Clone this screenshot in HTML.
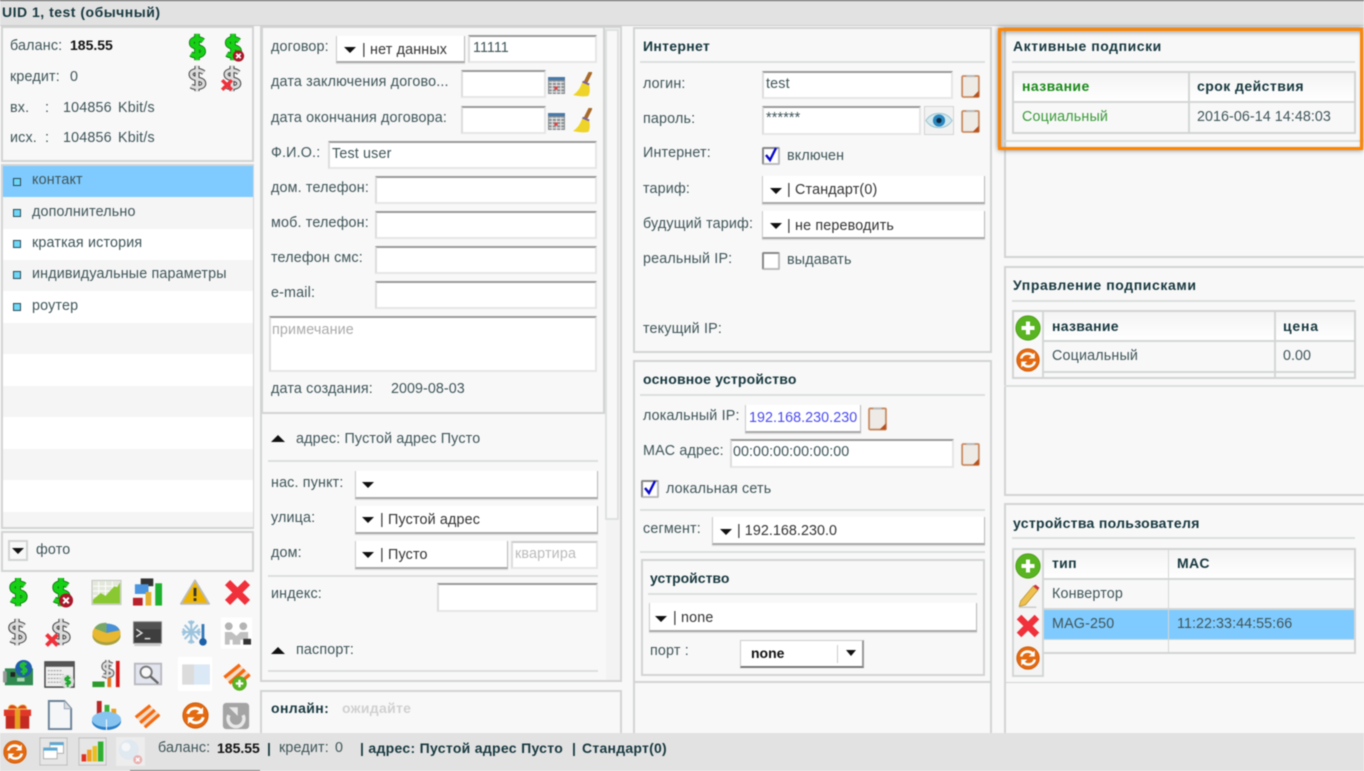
<!DOCTYPE html>
<html lang="ru">
<head>
<meta charset="utf-8">
<title>UID 1, test</title>
<style>
html,body{margin:0;padding:0;width:1364px;height:771px;overflow:hidden;background:#f8f8f8}
#r{position:relative;width:1364px;height:771px;overflow:hidden;background:#f8f8f8;font:14.3px "Liberation Sans","Noto Sans CJK SC",sans-serif;letter-spacing:.17px;color:#3f5559;filter:blur(.4px)}
#r>*{position:absolute;box-sizing:border-box}
.t{white-space:nowrap;line-height:18px;height:16px}
.b{font-weight:700;font-size:14px;line-height:16px;color:#17383f;letter-spacing:.3px}
.k{font-weight:700;font-size:14px;line-height:16px;letter-spacing:0;color:#111}
.n{letter-spacing:.06px}
.p{border:2px solid #d2d4d4;background:#f8f8f8}
.l{height:2px;background:#dcdfdf}
.i{background:#fff;border:2px solid #e6e6e6;border-top:2px solid #9a9a9a;border-left-color:#ddd}
.s{background:#fff;border-right:1px solid #bbb;border-bottom:2px solid #aaa;border-left:1px solid #ccc;box-shadow:0 1px 1px #ddd}
.a{width:0;height:0;border-left:6px solid transparent;border-right:6px solid transparent;border-top:6px solid #111}
.u{width:0;height:0;border-left:7px solid transparent;border-right:7px solid transparent;border-bottom:7px solid #111}
.c{background:#fff;border:2px solid #888;border-right-color:#bbb;border-bottom-color:#bbb;border-radius:2px}
.m{left:3px;width:250px}
.d{width:8px;height:8px;background:#6fd8f8;border:1px solid #2c4a55;left:13px}
.v{background:#d4d6d6}
svg{position:absolute;overflow:visible}
</style>
</head>
<body>
<svg width="0" height="0" style="position:absolute;left:0;top:0">
<defs>
<symbol id="dg" viewBox="0 0 32 32"><path d="M23 9C19 6 10 6 10 11c0 7 13 3 13 10 0 5-9 6-14 3M16 1v30" fill="none" stroke="#0a6a0a" stroke-width="6.500"/><path d="M23 9C19 6 10 6 10 11c0 7 13 3 13 10 0 5-9 6-14 3M16 1v30" fill="none" stroke="#16d016" stroke-width="4.800"/></symbol>
<symbol id="ds" viewBox="0 0 32 32"><path d="M24 9C19 5 9 6 9 11c0 7 15 4 15 11 0 5-10 6-15 3M16 1v30" fill="none" stroke="#444" stroke-width="6"/><path d="M24 9C19 5 9 6 9 11c0 7 15 4 15 11 0 5-10 6-15 3M16 1v30" fill="none" stroke="#dcdcdc" stroke-width="3.600"/></symbol>
<symbol id="rb" viewBox="0 0 32 32"><circle cx="16" cy="16" r="15" fill="#a8182a"/><path d="M10 10l12 12M22 10L10 22" stroke="#fff" stroke-width="4.500"/></symbol>
<symbol id="xx" viewBox="0 0 32 32"><path d="M5 5l22 22M27 5L5 27" stroke="#f0303a" stroke-width="8"/></symbol>
<symbol id="gr" viewBox="0 0 32 32"><rect x="1" y="4" width="30" height="25" fill="#e4e8dc" stroke="#c4c4c4"/><path d="M2 10h28M2 15h28M2 20h28M8 5v23M15 5v23M22 5v23" stroke="#fff"/><path d="M2 28V24l8-7 5 3 9-10 3 1 3-5v22z" fill="#8ac832"/></symbol>
<symbol id="nb" viewBox="0 0 32 32"><rect x="9" y="2" width="13" height="8" fill="#333"/><rect x="3" y="8" width="14" height="10" fill="#4a94e0"/><rect x="1" y="22" width="10" height="8" fill="#b8202a"/><rect x="14" y="16" width="6" height="14" fill="#e4b030"/><rect x="24" y="7" width="7" height="23" fill="#20b030"/></symbol>
<symbol id="wa" viewBox="0 0 32 32"><path d="M16 3L31 28H1z" fill="#eeb400" stroke="#bbb" stroke-width="2" stroke-linejoin="round"/><path d="M16 11v9M16 22v3" stroke="#333" stroke-width="3"/></symbol>
<symbol id="te" viewBox="0 0 32 32"><rect x="1" y="4" width="30" height="23" fill="#3e3e3e" stroke="#999"/><path d="M4 12l6 4-6 4M13 22h6" fill="none" stroke="#ddd" stroke-width="1.600"/><rect x="2" y="4" width="28" height="8" fill="#666" opacity=".5"/><rect x="2" y="27" width="28" height="3" fill="#ccc"/></symbol>
<symbol id="sn" viewBox="0 0 32 32"><path d="M12 3v25M2 15.500h20M5 8l14 15M19 8L5 23M9 4l3 3 3-3M9 27l3-3 3 3M3 12l3 3.500-3 3.500M21 12l-3 3.500 3 3.500" fill="none" stroke="#9cc4de" stroke-width="2.200"/><rect x="23" y="7" width="3" height="17" fill="#3478b8"/><circle cx="24.500" cy="26" r="4" fill="#1c60a8"/></symbol>
<symbol id="hs" viewBox="0 0 32 32"><rect width="32" height="32" fill="#fff"/><circle cx="8" cy="9" r="4" fill="#b4b4b4"/><circle cx="23" cy="9" r="4" fill="#b4b4b4"/><path d="M4 28V15h7l5 4 4-4h8v8H20v5h-8v-5H9v5z" fill="#c0c0c0"/><rect x="23" y="22" width="8" height="6" fill="#333"/></symbol>
<symbol id="ni" viewBox="0 0 32 32"><rect x="2" y="10" width="30" height="18" fill="#2f8a50"/><rect x="0" y="13" width="4" height="12" fill="#999"/><rect x="8" y="14" width="5" height="5" fill="#222"/><rect x="15" y="20" width="8" height="4" fill="#a8d8b0"/><circle cx="22" cy="10" r="9" fill="#1d5fa8"/><path d="M25 6c-3-2-6-1-6 1 0 3 6 2 6 5 0 2-3 3-6 1M22 3v14" fill="none" stroke="#22c030" stroke-width="2.500"/></symbol>
<symbol id="tb" viewBox="0 0 32 32"><rect x="1" y="3" width="30" height="26" fill="#eee" stroke="#444" stroke-width="1.500"/><rect x="1" y="3" width="30" height="5" fill="#555"/><path d="M4 12h14M4 16h16M4 20h13M4 24h14" stroke="#999" stroke-dasharray="2 1"/><circle cx="24" cy="23" r="7" fill="#ddd"/><path d="M27 20c-2-1-5-1-5 1 0 2 5 1 5 3s-3 2-5 1M24.500 17v12" fill="none" stroke="#18a828" stroke-width="2"/></symbol>
<symbol id="sb" viewBox="0 0 32 32"><path d="M22 6c-4-2-9-2-9 2 0 5 9 3 9 7 0 3-6 4-10 2M17 1v20" fill="none" stroke="#666" stroke-width="5"/><path d="M22 6c-4-2-9-2-9 2 0 5 9 3 9 7 0 3-6 4-10 2M17 1v20" fill="none" stroke="#ddd" stroke-width="2.500"/><rect x="1" y="24" width="13" height="6" fill="#2c9a2c"/><rect x="17" y="20" width="4" height="10" fill="#e87820"/><rect x="26" y="2" width="4" height="28" fill="#d81818"/></symbol>
<symbol id="mg" viewBox="0 0 32 32"><rect x="2" y="5" width="28" height="22" fill="#e2e4ee" stroke="#b8b8c0" stroke-width="2"/><circle cx="14" cy="14" r="6" fill="#f8f8f8" stroke="#777" stroke-width="2"/><path d="M18 18l9 8" stroke="#666" stroke-width="2.500"/></symbol>
<symbol id="cd" viewBox="0 0 32 32"><rect x="0" y="0" width="32" height="32" fill="#fff"/><rect x="4" y="7" width="26" height="19" fill="#dbe8f6"/><rect x="4" y="7" width="11" height="19" fill="#dcdcdc"/></symbol>
<symbol id="st" viewBox="0 0 32 32"><path d="M3 18L19 5l11 10-16 14z" fill="#f6dcc8"/><path d="M3 18L19 5M8 24L24 10M13 29L29 15" stroke="#f46a10" stroke-width="3.500"/></symbol>
<symbol id="pl" viewBox="0 0 32 32"><circle cx="16" cy="16" r="15" fill="#58b420" stroke="#4a9a18"/><path d="M16 8v16M8 16h16" stroke="#fff" stroke-width="5"/></symbol>
<symbol id="gi" viewBox="0 0 32 32"><path d="M3 12h26v18H3z" fill="#c42a20"/><path d="M1 9h30v7H1z" fill="#e03828"/><path d="M13 9h6v21h-6z" fill="#e8a020"/><path d="M6 8c0-6 8-5 10 0 2-5 10-6 10 0z" fill="#e04020" stroke="#e8a020"/></symbol>
<symbol id="dc" viewBox="0 0 32 32"><path d="M5 1h16l7 8v21H5z" fill="#f4f6f8" stroke="#6a8298" stroke-width="2"/><path d="M21 1v8h7" fill="#ddd" stroke="#9ab"/></symbol>
<symbol id="pi" viewBox="0 0 32 32"><rect x="6" y="1" width="5" height="15" fill="#b82828"/><rect x="14" y="5" width="5" height="11" fill="#38b038"/><rect x="21" y="9" width="5" height="8" fill="#e8a020"/><ellipse cx="16" cy="22" rx="15" ry="9" fill="#2c80c8"/><ellipse cx="16" cy="20" rx="15" ry="8" fill="#88c4f0"/><path d="M16 20v11" stroke="#fff"/></symbol>
<symbol id="re" viewBox="0 0 32 32"><circle cx="16" cy="16" r="15" fill="#e46a10" stroke="#c85808"/><path d="M7 14c1-7 11-9 16-3M25 18c-1 7-11 9-16 3" fill="none" stroke="#fff" stroke-width="3.500"/><path d="M25 6v8h-8zM7 26v-8h8z" fill="#fff"/></symbol>
<symbol id="rg" viewBox="0 0 32 32"><rect x="1" y="1" width="30" height="30" rx="4" fill="#a4a4a4"/><path d="M8 15a9 9 0 1 0 16 0" fill="none" stroke="#e8e8e8" stroke-width="4"/><path d="M8 6h10v10z" fill="#e8e8e8"/></symbol>
<symbol id="pn" viewBox="0 0 32 32"><path d="M6 23L22 4l6 5-16 19-8 2z" fill="#eec050" stroke="#b89030"/><path d="M22 4l3-2 5 4-2 3z" fill="#d03040"/><path d="M4 31h22" stroke="#ccc" stroke-width="2"/></symbol>
<symbol id="cl" viewBox="0 0 18 22"><rect x="1" y="1" width="16" height="20" rx="1" fill="#eeeae6" stroke="#c88a60" stroke-width="1.700"/><path d="M17 15v6h-6z" fill="#b8501c"/><rect x="5" y="0" width="8" height="2" fill="#bbb"/></symbol>
<symbol id="ey" viewBox="0 0 32 24"><path d="M1 12C8 1 24 1 31 12 24 23 8 23 1 12z" fill="#d4e8ee" stroke="#8fc0cc"/><circle cx="16" cy="12" r="7" fill="#2a88c0"/><circle cx="16" cy="12" r="3" fill="#0c2840"/></symbol>
<symbol id="ca" viewBox="0 0 16 16"><rect width="16" height="16" fill="#8a9094"/><rect width="16" height="3" fill="#4878a8"/><path d="M1 5h14M1 8h14M1 11h14M1 14h14M4 4v12M8 4v12M12 4v12" stroke="#e8e8e8"/><rect x="6" y="9" width="3" height="3" fill="#e04040"/></symbol>
<symbol id="br" viewBox="0 0 22 26"><path d="M19 1l-5 10" stroke="#a86a28" stroke-width="4" stroke-linecap="round"/><path d="M11 10l7 3c1 5 1 9-1 12-5 1-12 0-16-1 5-3 8-8 10-14z" fill="#eed428"/><path d="M11 10l7 3" stroke="#7860b0" stroke-width="2"/></symbol>
<symbol id="wn" viewBox="0 0 32 32"><rect x="1" y="1" width="30" height="30" fill="#e6e6e6" stroke="#bbb"/><rect x="12" y="6" width="15" height="12" fill="#fff" stroke="#aaa"/><rect x="12" y="6" width="15" height="3" fill="#58a8d8"/><rect x="5" y="12" width="15" height="12" fill="#fff" stroke="#aaa"/><rect x="5" y="12" width="15" height="3" fill="#58a8d8"/></symbol>
<symbol id="bc" viewBox="0 0 32 32"><rect x="1" y="1" width="30" height="30" fill="#e6e6e6" stroke="#bbb"/><rect x="4" y="19" width="5" height="8" fill="#e03020"/><rect x="10" y="14" width="5" height="13" fill="#f0a020"/><rect x="16" y="10" width="5" height="17" fill="#e8c020"/><rect x="22" y="5" width="6" height="22" fill="#30b030"/></symbol>
<symbol id="gl" viewBox="0 0 32 32"><rect width="32" height="32" fill="#ededed"/><circle cx="14" cy="14" r="11" fill="#e0e8f0"/><circle cx="11" cy="11" r="5" fill="#f4f6f8"/><circle cx="24" cy="25" r="5" fill="#e8b0b0"/><path d="M22 23l4 4M26 23l-4 4" stroke="#fff" stroke-width="1.500"/></symbol>
<symbol id="pc" viewBox="0 0 32 32"><ellipse cx="16" cy="19" rx="15" ry="10" fill="#a8a040"/><ellipse cx="16" cy="16" rx="15" ry="10" fill="#e8b830"/><path d="M16 16L3 11c3-5 8-6 13-6z" fill="#78a868"/><path d="M16 16V6c6 0 12 2 14 7z" fill="#4890d8"/></symbol>
</defs>
</svg>

<div id="r">
<div style="left:0;top:0;width:1364px;height:26px;background:#e2e2e2;border-top:1px solid #555;border-bottom:1px solid #ccc"></div>
<div class="t b" style="left:2px;top:4px;letter-spacing:.5px">UID 1, test (обычный)</div>

<div class="p" style="left:1px;top:26px;width:253px;height:136px"></div>
<div class="t" style="left:10px;top:37px">баланс:</div><div class="t k" style="left:70px;top:37px">185.55</div>
<div class="t" style="left:10px;top:68px">кредит:</div><div class="t" style="left:70px;top:68px">0</div>
<div class="t" style="left:10px;top:99px">вх.</div><div class="t" style="left:45px;top:99px">:</div><div class="t" style="left:63px;top:99px">104856</div><div class="t" style="left:118px;top:99px">Kbit/s</div>
<div class="t" style="left:10px;top:129px">исх.</div><div class="t" style="left:45px;top:129px">:</div><div class="t" style="left:63px;top:129px">104856</div><div class="t" style="left:118px;top:129px">Kbit/s</div>
<svg style="left:182px;top:33px" width="30" height="28"><use href="#dg"/></svg>
<svg style="left:218px;top:33px" width="30" height="28"><use href="#dg"/></svg>
<svg style="left:232px;top:50px" width="13" height="12"><use href="#rb"/></svg>
<svg style="left:183px;top:65px" width="28" height="27"><use href="#ds"/></svg>
<svg style="left:218px;top:65px" width="28" height="27"><use href="#ds"/></svg>
<svg style="left:220px;top:78px" width="14" height="14"><use href="#xx"/></svg>

<div class="p" style="left:1px;top:164px;width:253px;height:365px"></div>
<div class="m" style="top:166px;height:31px;background:#7fcbff"></div>
<div class="m" style="top:197px;height:32px;background:#f5f5f5"></div>
<div class="m" style="top:229px;height:31px;background:#fff"></div>
<div class="m" style="top:260px;height:31px;background:#f5f5f5"></div>
<div class="m" style="top:291px;height:32px;background:#fff"></div>
<div class="m" style="top:323px;height:31px;background:#f5f5f5"></div>
<div class="m" style="top:354px;height:32px;background:#fff"></div>
<div class="m" style="top:386px;height:31px;background:#f5f5f5"></div>
<div class="m" style="top:417px;height:32px;background:#fff"></div>
<div class="m" style="top:449px;height:31px;background:#f5f5f5"></div>
<div class="m" style="top:480px;height:32px;background:#fff"></div>
<div class="m" style="top:512px;height:15px;background:#f5f5f5"></div>
<div class="d" style="top:178px"></div><div class="t" style="left:32px;top:171px">контакт</div>
<div class="d" style="top:209px"></div><div class="t" style="left:32px;top:203px">дополнительно</div>
<div class="d" style="top:240px"></div><div class="t" style="left:32px;top:234px">краткая история</div>
<div class="d" style="top:271px"></div><div class="t" style="left:32px;top:265px">индивидуальные параметры</div>
<div class="d" style="top:303px"></div><div class="t" style="left:32px;top:297px">роутер</div>

<div class="p" style="left:1px;top:531px;width:253px;height:41px"></div>
<div style="left:8px;top:540px;width:20px;height:21px;background:#f8f8f8;border:2px solid #d2d4d4"></div>
<div class="a" style="left:12px;top:548px"></div>
<div class="t" style="left:36px;top:541px">фото</div>

<svg style="left:3px;top:577px" width="30" height="30"><use href="#dg"/></svg>
<svg style="left:46px;top:577px" width="30" height="30"><use href="#dg"/></svg><svg style="left:58px;top:593px" width="16" height="15"><use href="#rb"/></svg>
<svg style="left:91px;top:576px" width="31" height="32"><use href="#gr"/></svg>
<svg style="left:132px;top:576px" width="31" height="32"><use href="#nb"/></svg>
<svg style="left:180px;top:577px" width="30" height="31"><use href="#wa"/></svg>
<svg style="left:223px;top:578px" width="29" height="29"><use href="#xx"/></svg>
<svg style="left:3px;top:617px" width="28" height="30"><use href="#ds"/></svg>
<svg style="left:47px;top:617px" width="28" height="30"><use href="#ds"/></svg><svg style="left:44px;top:632px" width="16" height="16"><use href="#xx"/></svg>
<svg style="left:91px;top:618px" width="31" height="30"><use href="#pc"/></svg>
<svg style="left:132px;top:618px" width="31" height="30"><use href="#te"/></svg>
<svg style="left:180px;top:617px" width="30" height="31"><use href="#sn"/></svg>
<svg style="left:221px;top:617px" width="31" height="32"><use href="#hs"/></svg>
<svg style="left:2px;top:659px" width="32" height="30"><use href="#ni"/></svg>
<svg style="left:44px;top:659px" width="31" height="31"><use href="#tb"/></svg>
<svg style="left:91px;top:659px" width="31" height="30"><use href="#sb"/></svg>
<svg style="left:133px;top:659px" width="30" height="30"><use href="#mg"/></svg>
<svg style="left:178px;top:657px" width="34" height="34"><use href="#cd"/></svg>
<svg style="left:221px;top:660px" width="32" height="31"><use href="#st"/></svg>
<svg style="left:232px;top:676px" width="15" height="15"><use href="#pl"/></svg>
<svg style="left:3px;top:701px" width="29" height="30"><use href="#gi"/></svg>
<svg style="left:44px;top:700px" width="31" height="31"><use href="#dc"/></svg>
<svg style="left:91px;top:700px" width="31" height="31"><use href="#pi"/></svg>
<svg style="left:132px;top:701px" width="31" height="29"><use href="#st"/></svg>
<svg style="left:182px;top:702px" width="27" height="27"><use href="#re"/></svg>
<svg style="left:222px;top:702px" width="28" height="28"><use href="#rg"/></svg>

<div class="p" style="left:260px;top:26px;width:362px;height:656px"></div>
<div class="p" style="left:261px;top:26px;width:344px;height:388px"></div>
<div style="left:606px;top:28px;width:14px;height:652px;background:#f3f3f3"></div>
<div style="left:605px;top:29px;width:14px;height:491px;background:#f8f8f8;border:2px solid #dfe1e1"></div>
<div class="t" style="left:271px;top:38px">договор:</div>
<div class="s" style="left:336px;top:36px;width:129px;height:27px"></div><div class="a" style="left:344px;top:47px"></div><div class="t" style="left:362px;top:41px;color:#333">| нет данных</div>
<div class="i" style="left:468px;top:35px;width:129px;height:28px"></div><div class="t n" style="left:473px;top:39px">11111</div>
<div class="t" style="left:271px;top:73px">дата заключения догово...</div>
<div class="i" style="left:461px;top:70px;width:85px;height:28px"></div>
<svg style="left:548px;top:77px" width="17" height="17"><use href="#ca"/></svg><svg style="left:572px;top:72px" width="21" height="25"><use href="#br"/></svg>
<div class="t" style="left:271px;top:109px">дата окончания договора:</div>
<div class="i" style="left:461px;top:106px;width:85px;height:28px"></div>
<svg style="left:548px;top:113px" width="17" height="17"><use href="#ca"/></svg><svg style="left:572px;top:108px" width="21" height="25"><use href="#br"/></svg>
<div class="t" style="left:271px;top:144px">Ф.И.О.:</div>
<div class="i" style="left:328px;top:141px;width:269px;height:28px"></div><div class="t" style="left:332px;top:145px">Test user</div>
<div class="t" style="left:271px;top:179px">дом. телефон:</div><div class="i" style="left:375px;top:176px;width:222px;height:28px"></div>
<div class="t" style="left:271px;top:214px">моб. телефон:</div><div class="i" style="left:375px;top:211px;width:222px;height:28px"></div>
<div class="t" style="left:271px;top:249px">телефон смс:</div><div class="i" style="left:375px;top:246px;width:222px;height:28px"></div>
<div class="t" style="left:271px;top:284px">e-mail:</div><div class="i" style="left:375px;top:281px;width:222px;height:28px"></div>
<div class="i" style="left:269px;top:316px;width:328px;height:56px"></div><div class="t" style="left:272px;top:321px;color:#aaa">примечание</div>
<div class="t" style="left:271px;top:380px">дата создания:</div><div class="t n" style="left:391px;top:380px">2009-08-03</div>
<div class="u" style="left:271px;top:435px"></div><div class="t" style="left:296px;top:430px">адрес: Пустой адрес Пусто</div>
<div class="l" style="left:268px;top:460px;width:330px"></div>
<div class="t" style="left:271px;top:474px">нас. пункт:</div>
<div class="s" style="left:355px;top:471px;width:243px;height:28px"></div><div class="a" style="left:362px;top:482px"></div>
<div class="t" style="left:271px;top:509px">улица:</div>
<div class="s" style="left:355px;top:506px;width:243px;height:28px"></div><div class="a" style="left:362px;top:517px"></div><div class="t" style="left:380px;top:511px;color:#333">| Пустой адрес</div>
<div class="t" style="left:271px;top:544px">дом:</div>
<div class="s" style="left:355px;top:541px;width:153px;height:28px"></div><div class="a" style="left:362px;top:552px"></div><div class="t" style="left:380px;top:546px;color:#333">| Пусто</div>
<div class="i" style="left:511px;top:541px;width:87px;height:28px;border-top-color:#ccc"></div><div class="t" style="left:515px;top:545px;color:#bbb">квартира</div>
<div class="l" style="left:268px;top:575px;width:330px"></div>
<div class="t" style="left:271px;top:585px">индекс:</div><div class="i" style="left:437px;top:583px;width:161px;height:29px"></div>
<div class="u" style="left:271px;top:647px"></div><div class="t" style="left:296px;top:641px">паспорт:</div>
<div class="l" style="left:268px;top:670px;width:330px"></div>

<div class="p" style="left:260px;top:690px;width:362px;height:50px"></div>
<div class="t b" style="left:271px;top:700px;letter-spacing:.4px">онлайн:</div><div class="t" style="left:342px;top:700px;font-size:14px;line-height:16px;font-weight:700;color:#d0d0d0;letter-spacing:.3px">ожидайте</div>

<div class="p" style="left:633px;top:682px;width:359px;height:58px;border-top:0"></div>
<div class="p" style="left:633px;top:27px;width:359px;height:326px"></div>
<div class="t b" style="left:643px;top:38px">Интернет</div><div class="l" style="left:640px;top:61px;width:345px"></div>
<div class="t" style="left:643px;top:75px">логин:</div><div class="i" style="left:762px;top:71px;width:191px;height:28px"></div><div class="t" style="left:766px;top:75px">test</div>
<svg style="left:961px;top:75px" width="19" height="23"><use href="#cl"/></svg>
<div class="t" style="left:643px;top:110px">пароль:</div><div class="i" style="left:762px;top:106px;width:159px;height:29px"></div><div class="t" style="left:766px;top:109px">******</div>
<div style="left:924px;top:106px;width:30px;height:29px;border:1px solid #d4d4d4;background:#f2f2f2"></div><svg style="left:925px;top:110px" width="28" height="21"><use href="#ey"/></svg>
<svg style="left:961px;top:110px" width="19" height="23"><use href="#cl"/></svg>
<div class="t" style="left:643px;top:144px">Интернет:</div>
<div class="c" style="left:762px;top:147px;width:18px;height:18px"></div><svg style="left:763px;top:147px" width="16" height="16" viewBox="0 0 16 16"><path d="M3 8l4 5 6-12" fill="none" stroke="#0a0ac8" stroke-width="2.400"/></svg>
<div class="t" style="left:787px;top:147px">включен</div>
<div class="t" style="left:643px;top:180px">тариф:</div><div class="s" style="left:762px;top:176px;width:223px;height:28px"></div><div class="a" style="left:770px;top:188px"></div><div class="t" style="left:787px;top:181px;color:#333">| Стандарт(0)</div>
<div class="t" style="left:643px;top:215px">будущий тариф:</div><div class="s" style="left:762px;top:211px;width:223px;height:28px"></div><div class="a" style="left:770px;top:223px"></div><div class="t" style="left:787px;top:217px;color:#333">| не переводить</div>
<div class="t" style="left:643px;top:250px">реальный IP:</div><div class="c" style="left:762px;top:252px;width:18px;height:18px"></div><div class="t" style="left:787px;top:251px">выдавать</div>
<div class="t" style="left:643px;top:320px">текущий IP:</div>

<div class="p" style="left:633px;top:360px;width:359px;height:323px"></div>
<div class="t b" style="left:643px;top:371px;letter-spacing:.2px">основное устройство</div><div class="l" style="left:640px;top:394px;width:345px"></div>
<div class="t" style="left:643px;top:407px">локальный IP:</div><div class="s" style="left:745px;top:405px;width:116px;height:28px"></div><div class="t n" style="left:749px;top:409px;color:#4a4af0">192.168.230.230</div>
<svg style="left:868px;top:407px" width="19" height="24"><use href="#cl"/></svg>
<div class="t" style="left:643px;top:442px">MAC адрес:</div><div class="i" style="left:730px;top:439px;width:224px;height:29px"></div><div class="t n" style="left:733px;top:443px">00:00:00:00:00:00</div>
<svg style="left:961px;top:443px" width="19" height="23"><use href="#cl"/></svg>
<div class="c" style="left:641px;top:480px;width:18px;height:18px"></div><svg style="left:642px;top:480px" width="16" height="16" viewBox="0 0 16 16"><path d="M3 8l4 5 6-12" fill="none" stroke="#0a0ac8" stroke-width="2.400"/></svg>
<div class="t" style="left:666px;top:480px">локальная сеть</div>
<div class="l" style="left:640px;top:509px;width:345px"></div>
<div class="t" style="left:643px;top:520px">сегмент:</div><div class="s" style="left:712px;top:517px;width:273px;height:28px"></div><div class="a" style="left:720px;top:529px"></div><div class="t n" style="left:737px;top:522px;color:#333">| 192.168.230.0</div>
<div class="l" style="left:640px;top:551px;width:345px"></div>
<div class="p" style="left:641px;top:559px;width:344px;height:117px"></div>
<div class="t b" style="left:650px;top:570px;letter-spacing:0">устройство</div><div class="l" style="left:648px;top:593px;width:329px"></div>
<div class="s" style="left:649px;top:603px;width:328px;height:29px"></div><div class="a" style="left:655px;top:616px"></div><div class="t" style="left:673px;top:609px;color:#333">| none</div>
<div class="t" style="left:650px;top:642px">порт :</div>
<div style="left:740px;top:640px;width:124px;height:28px;background:#fff;border:1px solid #ccc;border-bottom:2px solid #777;border-right:2px solid #999"></div>
<div class="t k" style="left:751px;top:645px">none</div><div style="left:837px;top:645px;width:1px;height:18px;background:#ccc"></div>
<div class="a" style="left:846px;top:650px;border-width:6px 5px 0"></div>

<div class="p" style="left:1004px;top:27px;width:362px;height:231px"></div>
<div class="t b" style="left:1013px;top:38px;letter-spacing:.55px">Активные подписки</div><div class="l" style="left:1012px;top:61px;width:343px"></div>
<div class="p" style="left:1012px;top:71px;width:344px;height:63px;background:#f8f8f8"></div>
<div style="left:1014px;top:73px;width:340px;height:28px;background:linear-gradient(#f4f4f4,#fff)"></div>
<div class="v" style="left:1014px;top:101px;width:340px;height:2px"></div><div class="v" style="left:1188px;top:73px;width:2px;height:59px"></div>
<div class="t" style="left:1022px;top:78px;font-size:14px;line-height:16px;font-weight:700;color:#1a8a1a;letter-spacing:.4px">название</div>
<div class="t b" style="left:1197px;top:78px;letter-spacing:.45px">срок действия</div>
<div class="t" style="left:1022px;top:108px;color:#3a9a3a">Социальный</div><div class="t n" style="left:1197px;top:108px">2016-06-14 14:48:03</div>
<div class="l" style="left:1004px;top:140px;width:360px"></div>
<div style="left:998px;top:28px;width:365px;height:122px;border:3px solid #ff8400;box-shadow:0 0 5px #777,inset 2px 2px 4px rgba(0,0,0,.3)"></div>

<div class="p" style="left:1004px;top:266px;width:362px;height:230px"></div>
<div class="t b" style="left:1013px;top:277px;letter-spacing:.6px">Управление подписками</div><div class="l" style="left:1012px;top:300px;width:343px"></div>
<div class="p" style="left:1012px;top:310px;width:344px;height:69px"></div>
<div class="v" style="left:1042px;top:312px;width:2px;height:65px"></div><div style="left:1044px;top:312px;width:310px;height:28px;background:linear-gradient(#f4f4f4,#fff)"></div>
<div class="v" style="left:1044px;top:340px;width:310px;height:2px"></div><div class="v" style="left:1044px;top:371px;width:310px;height:2px"></div><div class="v" style="left:1274px;top:312px;width:2px;height:65px"></div>
<div class="t b" style="left:1052px;top:318px">название</div><div class="t b" style="left:1283px;top:318px;letter-spacing:.8px">цена</div>
<div class="t" style="left:1052px;top:347px">Социальный</div><div class="t n" style="left:1283px;top:347px">0.00</div>
<svg style="left:1015px;top:315px" width="26" height="26"><use href="#pl"/></svg><svg style="left:1016px;top:348px" width="24" height="24"><use href="#re"/></svg>
<div class="l" style="left:1004px;top:385px;width:360px"></div>

<div class="p" style="left:1004px;top:503px;width:362px;height:181px"></div>
<div class="p" style="left:1004px;top:683px;width:362px;height:57px;border-top:0"></div>
<div class="t b" style="left:1013px;top:515px">устройства пользователя</div><div class="l" style="left:1012px;top:537px;width:343px"></div>
<div class="p" style="left:1012px;top:548px;width:344px;height:106px"></div>
<div style="left:1012px;top:548px;width:32px;height:129px;border:2px solid #d4d6d6;background:#f4f4f4"></div>
<div style="left:1044px;top:550px;width:310px;height:28px;background:linear-gradient(#f4f4f4,#fff)"></div>
<div class="v" style="left:1044px;top:578px;width:310px;height:2px"></div>
<div class="v" style="left:1044px;top:608px;width:310px;height:2px"></div>
<div style="left:1044px;top:610px;width:310px;height:29px;background:#7fcbff"></div>
<div class="v" style="left:1044px;top:639px;width:310px;height:1px"></div>
<div class="v" style="left:1168px;top:550px;width:1px;height:102px"></div>
<div class="t b" style="left:1052px;top:555px">тип</div><div class="t b" style="left:1177px;top:555px">MAC</div>
<div class="t" style="left:1052px;top:585px">Конвертор</div>
<div class="t" style="left:1052px;top:615px">MAG-250</div><div class="t n" style="left:1177px;top:615px">11:22:33:44:55:66</div>
<svg style="left:1015px;top:553px" width="26" height="26"><use href="#pl"/></svg>
<svg style="left:1016px;top:583px" width="25" height="25"><use href="#pn"/></svg>
<svg style="left:1015px;top:613px" width="26" height="26"><use href="#xx"/></svg>
<svg style="left:1016px;top:646px" width="24" height="24"><use href="#re"/></svg>

<div style="left:0;top:733px;width:1364px;height:38px;background:#e2e2e2"></div>
<div style="left:130px;top:770px;width:130px;height:1px;background:#777"></div>
<svg style="left:3px;top:740px" width="24" height="24"><use href="#re"/></svg>
<svg style="left:39px;top:737px" width="29" height="29"><use href="#wn"/></svg>
<svg style="left:78px;top:737px" width="29" height="29"><use href="#bc"/></svg>
<svg style="left:116px;top:737px" width="29" height="29"><use href="#gl"/></svg>
<div class="t" style="left:158px;top:739px">баланс:</div><div class="t k" style="left:217px;top:740px">185.55</div><div class="t b" style="left:267px;top:740px">|</div>
<div class="t" style="left:279px;top:739px">кредит:</div><div class="t" style="left:335px;top:739px">0</div>
<div class="t b" style="left:360px;top:740px;letter-spacing:.3px">| адрес: Пустой адрес Пусто</div><div class="t b" style="left:572px;top:740px">|</div><div class="t b" style="left:582px;top:740px;letter-spacing:.25px">Стандарт(0)</div>
</div>
</body>
</html>
